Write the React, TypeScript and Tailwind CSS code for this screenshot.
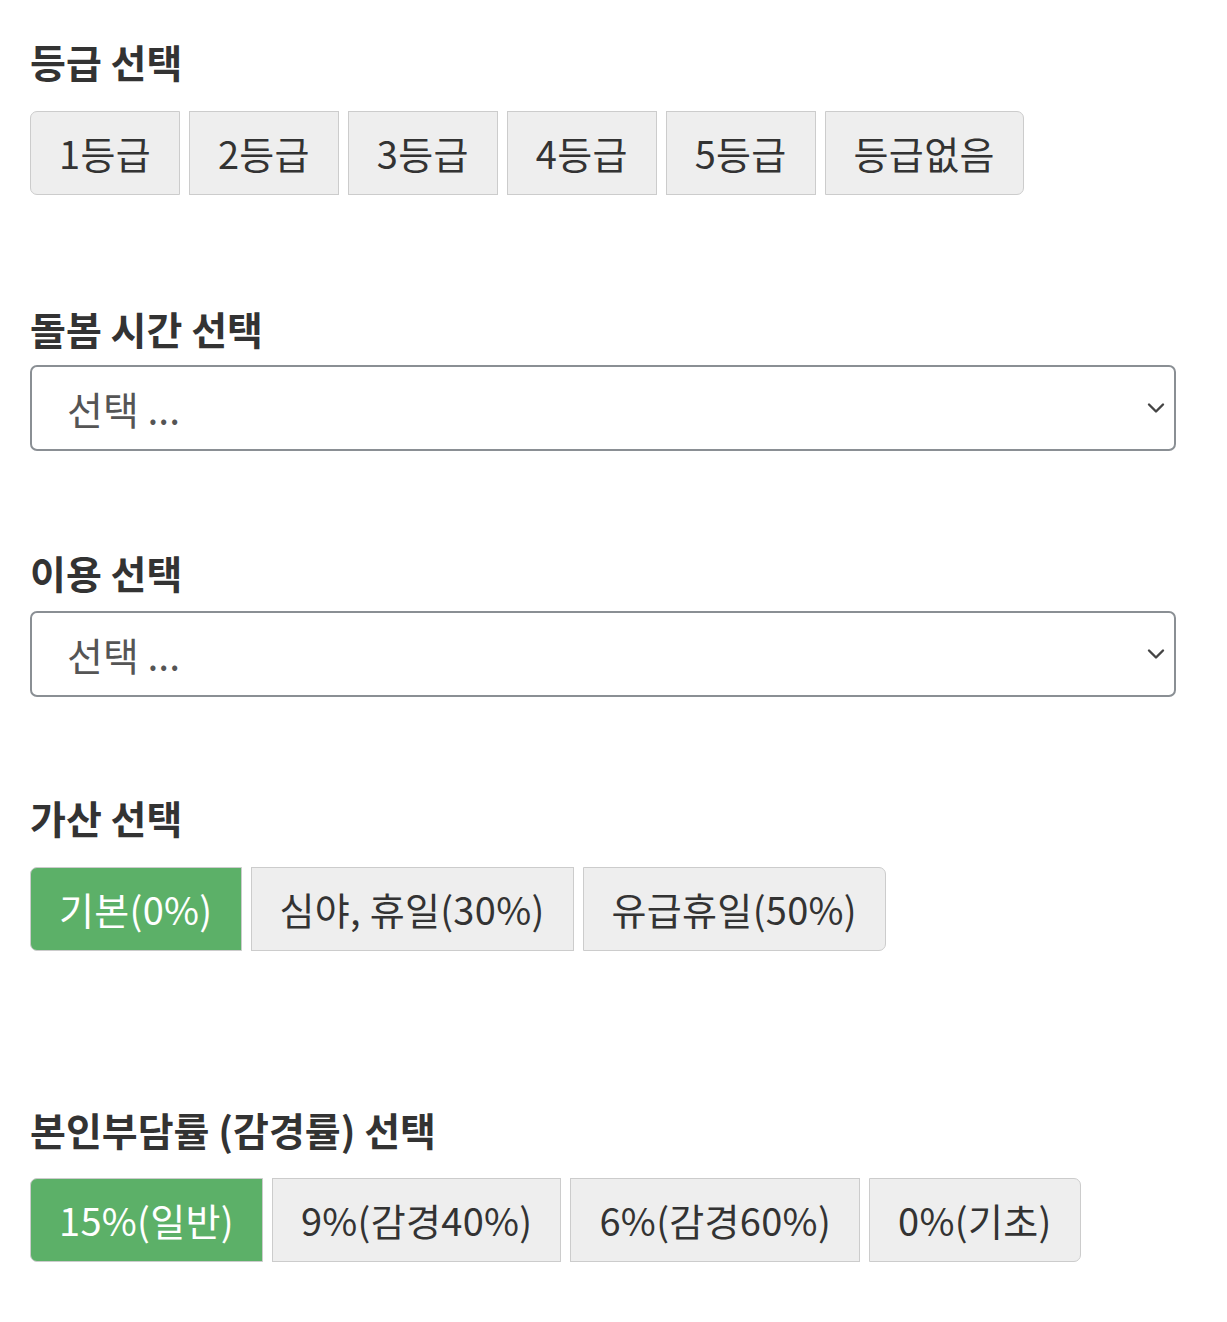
import React, { useState } from 'react';

const font = { fontFamily: '"Noto Sans CJK KR", "Noto Sans", sans-serif' };

interface GroupProps {
  items: string[];
  active?: number;
  onPick: (i: number) => void;
}

function ButtonGroup({ items, active, onPick }: GroupProps) {
  return (
    <div className="flex gap-[9px]">
      {items.map((label, i) => {
        const isActive = i === active;
        const first = i === 0;
        const last = i === items.length - 1;
        return (
          <button
            key={label}
            onClick={() => onPick(i)}
            className={`border border-[#cccccc] px-[28px] py-[15px] text-[38px] leading-[52px] tracking-[0.3px] ${
              isActive ? 'bg-[#5cb068] text-white' : 'bg-[#eeeeee] text-[#333333]'
            } ${first ? 'rounded-l-[7px]' : ''} ${last ? 'rounded-r-[7px]' : ''}`}
          >
            {label}
          </button>
        );
      })}
    </div>
  );
}

function Select() {
  return (
    <div className="relative">
      <select
        className="w-full appearance-none rounded-[7px] border-2 border-[#8a8f94] bg-white pl-[35px] text-[39px] leading-[82px] h-[86px] text-[#555555]"
        defaultValue=""
      >
        <option value="">선택 ...</option>
      </select>
      <svg
        className="pointer-events-none absolute right-[10px] top-1/2 -translate-y-1/2"
        width="20"
        height="12"
        viewBox="0 0 20 12"
        fill="none"
        stroke="#444"
        strokeWidth="2.4"
        strokeLinecap="round"
        strokeLinejoin="round"
      >
        <path d="M3 2.5 L10 9.5 L17 2.5" />
      </svg>
    </div>
  );
}

function Heading({ children }: { children: React.ReactNode }) {
  return <h3 className="text-[39px] font-bold leading-[52px] text-[#333333]">{children}</h3>;
}

export default function App() {
  const [grade, setGrade] = useState<number | undefined>(undefined);
  const [extra, setExtra] = useState(0);
  const [rate, setRate] = useState(0);

  return (
    <div className="min-h-[1322px] bg-white px-[30px] pt-[35px] w-[1206px]" style={font}>
      <section>
        <Heading>등급 선택</Heading>
        <div className="mt-[24px]">
          <ButtonGroup
            items={['1등급', '2등급', '3등급', '4등급', '5등급', '등급없음']}
            active={grade}
            onPick={setGrade}
          />
        </div>
      </section>

      <section className="mt-[107px]">
        <Heading>돌봄 시간 선택</Heading>
        <div className="mt-[11px]">
          <Select />
        </div>
      </section>

      <section className="mt-[95px]">
        <Heading>이용 선택</Heading>
        <div className="mt-[13px]">
          <Select />
        </div>
      </section>

      <section className="mt-[94px]">
        <Heading>가산 선택</Heading>
        <div className="mt-[24px]">
          <ButtonGroup items={['기본(0%)', '심야, 휴일(30%)', '유급휴일(50%)']} active={extra} onPick={setExtra} />
        </div>
      </section>

      <section className="mt-[152px]">
        <Heading>본인부담률 (감경률) 선택</Heading>
        <div className="mt-[23px]">
          <ButtonGroup
            items={['15%(일반)', '9%(감경40%)', '6%(감경60%)', '0%(기초)']}
            active={rate}
            onPick={setRate}
          />
        </div>
      </section>
    </div>
  );
}
